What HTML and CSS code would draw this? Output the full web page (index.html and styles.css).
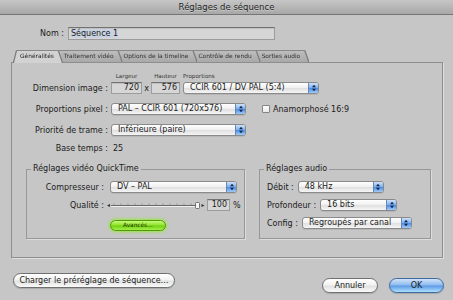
FILE: index.html
```html
<!DOCTYPE html>
<html lang="fr">
<head>
  <meta charset="UTF-8">
  <title>Réglages de séquence</title>
  <link rel="stylesheet" href="styles.css">
</head>
<body>
  <div class="window">

    <!-- Barre de titre -->
    <div class="titlebar">Réglages de séquence</div>

    <!-- Nom -->
    <div class="name-row">
      <span class="name-label">Nom :</span>
      <div class="field name-field"><span class="selected">Séquence 1</span></div>
    </div>

    <!-- Onglets -->
    <div class="tabs">
      <div class="tab active"><span>Généralités</span></div>
      <div class="tab"><span>Traitement vidéo</span></div>
      <div class="tab"><span>Options de la timeline</span></div>
      <div class="tab"><span>Contrôle de rendu</span></div>
      <div class="tab"><span>Sorties audio</span></div>
    </div>

    <div class="panel">
      <div class="row header-row">
        <span class="row-label"></span>
        <span class="hdr-w">Largeur</span>
        <span class="hdr-x"></span>
        <span class="hdr-h">Hauteur</span>
        <span class="hdr-p">Proportions</span>
      </div>

      <div class="row dim-row">
        <span class="row-label">Dimension image :</span>
        <div class="field num num-w">720</div>
        <span class="times">x</span>
        <div class="field num num-h">576</div>
        <div class="popup popup-ratio">
          <span class="popup-text">CCIR 601 / DV PAL (5:4)</span>
          <span class="arrows"><svg viewBox="0 0 8 10"><path d="M2 4.3 4 1.8 6 4.3Z M2 5.7 4 8.2 6 5.7Z"/></svg></span>
        </div>
      </div>

      <div class="row pixel-row">
        <span class="row-label">Proportions pixel :</span>
        <div class="popup popup-main">
          <span class="popup-text">PAL – CCIR 601 (720x576)</span>
          <span class="arrows"><svg viewBox="0 0 8 10"><path d="M2 4.3 4 1.8 6 4.3Z M2 5.7 4 8.2 6 5.7Z"/></svg></span>
        </div>
        <span class="checkbox"></span>
        <span>Anamorphosé 16:9</span>
      </div>

      <div class="row field-row">
        <span class="row-label">Priorité de trame :</span>
        <div class="popup popup-main">
          <span class="popup-text">Inférieure (paire)</span>
          <span class="arrows"><svg viewBox="0 0 8 10"><path d="M2 4.3 4 1.8 6 4.3Z M2 5.7 4 8.2 6 5.7Z"/></svg></span>
        </div>
      </div>

      <div class="row base-row">
        <span class="row-label">Base temps :</span>
        <span class="base-value">25</span>
      </div>

      <div class="groups">
        <fieldset class="group group-qt">
          <legend>Réglages vidéo QuickTime</legend>
          <div class="row qt-row compress-row">
            <span class="qt-label">Compresseur :</span>
            <div class="popup popup-compress">
              <span class="popup-text">DV – PAL</span>
              <span class="arrows"><svg viewBox="0 0 8 10"><path d="M2 4.3 4 1.8 6 4.3Z M2 5.7 4 8.2 6 5.7Z"/></svg></span>
            </div>
          </div>
          <div class="row qt-row quality-row">
            <span class="qt-label quality-label">Qualité :</span>
            <svg class="slider" viewBox="0 0 98 9">
              <path d="M0 4.5 3 3v3Z" fill="#333"/>
              <line x1="4" y1="4.5" x2="91" y2="4.5" stroke="#6a6a6a" stroke-width="1"/>
              <line x1="4" y1="5.5" x2="91" y2="5.5" stroke="#eee" stroke-width="1"/>
              <path d="M7 2.6v2 M14 2.6v2 M21 2.6v2 M28 2.6v2 M35 2.6v2 M42 2.6v2 M49 2.6v2 M56 2.6v2 M63 2.6v2 M70 2.6v2 M77 2.6v2 M84 2.6v2" stroke="#777" stroke-width=".7"/>
              <rect x="88.5" y="1.5" width="4" height="6" rx="1" fill="#f6f6f6" stroke="#555" stroke-width=".8"/>
              <path d="M94.5 3v3l3-1.5Z" fill="#333"/>
            </svg>
            <div class="field num num-q">100</div>
            <span class="percent">%</span>
          </div>
          <div class="advanced">Avancés…</div>
        </fieldset>

        <fieldset class="group group-audio">
          <legend>Réglages audio</legend>
          <div class="row audio-row rate-row">
            <span>Débit :</span>
            <div class="popup popup-rate">
              <span class="popup-text">48 kHz</span>
              <span class="arrows"><svg viewBox="0 0 8 10"><path d="M2 4.3 4 1.8 6 4.3Z M2 5.7 4 8.2 6 5.7Z"/></svg></span>
            </div>
          </div>
          <div class="row audio-row">
            <span>Profondeur :</span>
            <div class="popup popup-depth">
              <span class="popup-text">16 bits</span>
              <span class="arrows"><svg viewBox="0 0 8 10"><path d="M2 4.3 4 1.8 6 4.3Z M2 5.7 4 8.2 6 5.7Z"/></svg></span>
            </div>
          </div>
          <div class="row audio-row">
            <span>Config :</span>
            <div class="popup popup-config">
              <span class="popup-text">Regroupés par canal</span>
              <span class="arrows"><svg viewBox="0 0 8 10"><path d="M2 4.3 4 1.8 6 4.3Z M2 5.7 4 8.2 6 5.7Z"/></svg></span>
            </div>
          </div>
        </fieldset>
      </div>
    </div>

    <!-- Boutons -->
    <div class="footer">
      <button class="btn btn-preset">Charger le préréglage de séquence…</button>
      <div class="footer-right">
        <button class="btn btn-cancel">Annuler</button>
        <button class="btn btn-ok">OK</button>
      </div>
    </div>

  </div>
</body>
</html>
```

FILE: styles.css
```css
* {
  box-sizing: border-box;
}

body {
  margin: 0;
  background-color: #c6c6c6;
  font-family: "DejaVu Sans", sans-serif;
  font-size: 8px;
  color: #1b1b1b;
}

.window {
  width: 453px;
  height: 300px;
  display: flex;
  flex-direction: column;
  overflow: hidden;
}

.titlebar {
  height: 15px;
  line-height: 14px;
  text-align: center;
  font-size: 8.5px;
  color: #1e1e1e;
  background: linear-gradient(#c6c6c6, #a8a8a8);
  border-bottom: 1px solid #767676;
  text-shadow: 0 1px 0 rgba(255, 255, 255, 0.35);
}

/* Champs */
.field {
  height: 13px;
  line-height: 11px;
  padding: 0 2px;
  background: #d6d6d6;
  border: 1px solid #9c9c9c;
  border-top-color: #727272;
  box-shadow: inset 0 1px 0 #c0c0c0;
  white-space: nowrap;
}

.name-row {
  display: flex;
  align-items: center;
  margin-top: 12px;
}

.name-label {
  width: 64px;
  text-align: right;
  margin-right: 4px;
}

.name-field {
  width: 207px;
}

.selected {
  background: #c9d2e0;
}

/* Onglets */
.tabs {
  display: flex;
  height: 11px;
  margin: 11px 0 0 14px;
  z-index: 2;
}

.tab {
  margin-right: -3px;
  filter: drop-shadow(1px 0 0 #7a7a7a) drop-shadow(-1px 0 0 #7a7a7a) drop-shadow(0 -1px 0 #888);
}

.tab:nth-child(1) { z-index: 5; }
.tab:nth-child(2) { z-index: 4; }
.tab:nth-child(3) { z-index: 3; }
.tab:nth-child(4) { z-index: 2; }
.tab:nth-child(5) { z-index: 1; }

.tab span {
  display: block;
  height: 11px;
  line-height: 11px;
  padding: 0 8px 0 5px;
  font-size: 5.9px;
  color: #333;
  white-space: nowrap;
  background: linear-gradient(#bdbdbd, #a9a9a9);
  clip-path: polygon(0 0, calc(100% - 4px) 0, 100% 100%, 0 100%);
}

.tab.active span {
  height: 12px;
  background: #d2d2d2;
  color: #222;
  padding-left: 6px;
  clip-path: polygon(3px 0, calc(100% - 4px) 0, 100% 100%, 0 100%);
}

/* Panneau */
.panel {
  margin-left: 11px;
  width: 432px;
  height: 196px;
  padding-top: 9px;
  border: 1px solid #8e8e8e;
  box-shadow: 1px 1px 0 #dedede;
}

.row {
  display: flex;
  align-items: center;
}

.row-label {
  width: 96px;
  margin-right: 3px;
  text-align: right;
  white-space: nowrap;
}

.header-row {
  height: 7px;
  font-size: 5.6px;
  color: #333;
}

.hdr-w {
  width: 31px;
  text-align: center;
}

.hdr-x {
  width: 9px;
}

.hdr-h {
  width: 29px;
  text-align: center;
}

.hdr-p {
  margin-left: 3px;
}

.dim-row {
  margin-top: 3px;
}

.num {
  height: 12px;
  line-height: 10px;
  text-align: right;
}

.num-w { width: 31px; }
.num-h { width: 29px; }

.times {
  width: 9px;
  text-align: center;
}

/* Menus local */
.popup {
  display: flex;
  height: 12px;
  border: 1px solid #8a8a8a;
  border-radius: 3px;
  background: linear-gradient(#ffffff, #f1f1f1 45%, #e1e1e1 55%, #f5f5f5);
  box-shadow: 0 1px 0 rgba(0, 0, 0, 0.08);
  overflow: hidden;
}

.popup-text {
  flex: 1;
  padding-left: 6px;
  line-height: 10px;
  white-space: nowrap;
}

.arrows {
  display: flex;
  align-items: center;
  justify-content: center;
  width: 10px;
  background: linear-gradient(#cfe2f9, #7fb2ee 46%, #4f8de2 54%, #9fcbf8);
  border-left: 1px solid #6686b4;
}

.arrows svg {
  width: 8px;
  height: 10px;
  fill: #14264a;
}

.popup-ratio {
  width: 136px;
  margin-left: 3px;
}

.popup-main {
  width: 135px;
}

.pixel-row {
  margin-top: 9px;
}

.field-row {
  margin-top: 9px;
}

.checkbox {
  width: 8px;
  height: 8px;
  margin: 0 3px 0 16px;
  border: 1px solid #858585;
  border-radius: 1px;
  background: linear-gradient(#ffffff, #e9e9e9);
}

.base-row {
  height: 10px;
  margin-top: 7px;
}

.base-value {
  margin-left: 2px;
}

/* Groupes */
.groups {
  display: flex;
  gap: 14px;
  margin: 11px 0 0 14px;
}

.group {
  margin: 0;
  padding: 0 0 7px;
  min-width: 0;
  border: 1px solid #979797;
  box-shadow: 1px 1px 0 #dcdcdc;
}

.group legend {
  margin-left: 4px;
  padding: 0 2px;
  line-height: 10px;
}

.group-qt {
  width: 219px;
}

.group-audio {
  width: 172px;
}

.qt-label {
  width: 77px;
  margin-right: 6px;
  text-align: right;
}

.compress-row {
  margin-top: 7px;
}

.popup-compress {
  width: 127px;
}

.quality-row {
  margin-top: 6px;
}

.quality-label {
  margin-right: 3px;
}

.slider {
  width: 98px;
  height: 9px;
}

.num-q {
  width: 23px;
  margin-left: 2px;
}

.percent {
  margin-left: 3px;
}

.advanced {
  width: 56px;
  height: 11px;
  margin: 9px 0 0 83px;
  border: 1px solid #4f9a0c;
  border-radius: 6px;
  font-size: 5.8px;
  line-height: 9px;
  text-align: center;
  color: #1d3300;
  background: linear-gradient(#c8f97a, #8ee22a 48%, #6fd00e 52%, #a4f04a);
  box-shadow: 0 0 3px 1px #97e83a;
}

.audio-row {
  padding-left: 7px;
}

.audio-row .popup {
  margin-left: 4px;
}

.rate-row {
  margin-top: 7px;
}

.audio-row + .audio-row {
  margin-top: 6px;
}

.popup-rate { width: 86px; }
.popup-depth { width: 77px; }
.popup-config { width: 110px; }

/* Pied */
.footer {
  display: flex;
  justify-content: space-between;
  margin-top: 15px;
  padding: 0 9px 0 13px;
}

.footer-right {
  display: flex;
  gap: 11px;
  margin-top: 5px;
}

.btn {
  height: 15px;
  padding: 0;
  font-family: "DejaVu Sans", sans-serif;
  font-size: 8px;
  color: #1b1b1b;
  border: 1px solid #6f6f6f;
  border-radius: 8px;
  background: linear-gradient(#ffffff, #f2f2f2 48%, #e0e0e0 52%, #fafafa);
  box-shadow: 0 1px 1px rgba(0, 0, 0, 0.15);
}

.btn-preset { width: 162px; }
.btn-cancel { width: 56px; }

.btn-ok {
  width: 55px;
  border-color: #3f689f;
  background: linear-gradient(#cfe3f9, #8cbaef 48%, #5c99e5 52%, #ade0fc);
}
```
